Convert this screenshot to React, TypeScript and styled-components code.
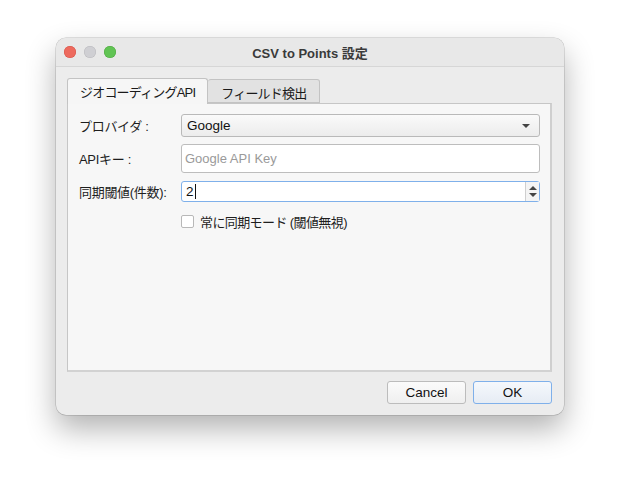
import React from "react";
import styled, { createGlobalStyle } from "styled-components";

const Global = createGlobalStyle`
  html, body { margin: 0; padding: 0; background: #ffffff; }
  body { font-family: "Liberation Sans", "Noto Sans CJK JP", sans-serif; }
  * { box-sizing: border-box; }
`;

const Page = styled.div`
  width: 620px;
  height: 490px;
  padding: 38px 0 0 56px;
  background: #ffffff;
`;

const Window = styled.div`
  width: 508px;
  height: 377px;
  border-radius: 10px;
  background: #ececec;
  box-shadow: 0 0 0 0.5px rgba(0, 0, 0, 0.22), 0 14px 30px rgba(0, 0, 0, 0.3);
  display: flex;
  flex-direction: column;
  overflow: hidden;
`;

const TitleBar = styled.div`
  height: 29px;
  flex: none;
  display: flex;
  align-items: center;
  padding-left: 8px;
  border-bottom: 1px solid #d6d6d6;
  background: #e8e8e8;
  position: relative;
`;

const Lights = styled.div`
  display: flex;
  gap: 8px;
`;

const Light = styled.span<{ $c: string; $b: string }>`
  width: 12px;
  height: 12px;
  border-radius: 50%;
  background: ${(p) => p.$c};
  box-shadow: inset 0 0 0 0.5px ${(p) => p.$b};
`;

const Title = styled.div`
  position: absolute;
  left: 0;
  right: 0;
  top: 0;
  bottom: 0;
  display: flex;
  align-items: center;
  justify-content: center;
  font-size: 13px;
  font-weight: bold;
  color: #3a3a3a;
  pointer-events: none;
`;

const Body = styled.div`
  flex: 1;
  display: flex;
  flex-direction: column;
  padding: 11px 12px 11px 11px;
`;

const TabStrip = styled.div`
  display: flex;
  align-items: flex-end;
  height: 25px;
  position: relative;
  z-index: 1;
`;

const Tab = styled.div<{ $active?: boolean }>`
  height: ${(p) => (p.$active ? "26px" : "24px")};
  margin-bottom: ${(p) => (p.$active ? "-1px" : "0")};
  padding: ${(p) => (p.$active ? "0 12px 0 12px" : "2px 13px 0 13px")};
  display: flex;
  align-items: center;
  font-size: 13px;
  letter-spacing: -0.8px;
  color: #1a1a1a;
  background: ${(p) => (p.$active ? "#f6f6f6" : "#e2e2e2")};
  border: 1px solid #c3c3c3;
  border-bottom: ${(p) => (p.$active ? "none" : "1px solid #c3c3c3")};
  border-left: ${(p) => (p.$active ? "1px solid #c3c3c3" : "none")};
  border-radius: 3px 3px 0 0;
`;

const Panel = styled.div`
  flex: 1;
  background: #f7f7f7;
  border: 1px solid #c6c6c6;
  border-right: 2px solid #cfcfcf;
  border-bottom: 2px solid #d2d2d2;
  padding: 10px 10px 0 11px;
  display: grid;
  grid-template-columns: 102px 1fr;
  grid-auto-rows: min-content;
  align-content: start;
  row-gap: 7px;
`;

const Label = styled.div`
  font-size: 13px;
  letter-spacing: -0.3px;
  color: #1e1e1e;
  display: flex;
  align-items: center;
  white-space: nowrap;
`;

const Combo = styled.div`
  height: 23px;
  border: 1px solid #b9b9b9;
  border-radius: 3px;
  background: linear-gradient(#fafafa, #ececec);
  display: flex;
  align-items: center;
  justify-content: space-between;
  padding: 0 9px 0 5px;
  font-size: 13.5px;
  color: #111;
`;

const Caret = styled.span`
  width: 0;
  height: 0;
  border-left: 4px solid transparent;
  border-right: 4px solid transparent;
  border-top: 4px solid #444;
`;

const TextField = styled.div`
  height: 29px;
  border: 1px solid #bdbdbd;
  border-radius: 3px;
  background: #ffffff;
  display: flex;
  align-items: center;
  padding: 0 6px 0 3px;
  font-size: 13px;
  color: #9a9a9a;
`;

const Spinner = styled.div`
  height: 21px;
  margin-top: 1px;
  border: 1px solid #7fb0ea;
  border-radius: 3px;
  background: #ffffff;
  display: flex;
  align-items: stretch;
  font-size: 13.5px;
  color: #111;
`;

const SpinValue = styled.div`
  flex: 1;
  display: flex;
  align-items: center;
  padding-left: 4px;
`;

const Cursor = styled.span`
  display: inline-block;
  width: 1px;
  height: 15px;
  background: #111;
  margin-left: 1px;
`;

const SpinButtons = styled.div`
  width: 14px;
  border-left: 1px solid #cfcfcf;
  display: flex;
  flex-direction: column;
  align-items: center;
  justify-content: center;
  gap: 3px;
  background: #f4f4f4;
`;

const Arrow = styled.span<{ $up?: boolean }>`
  width: 0;
  height: 0;
  border-left: 4px solid transparent;
  border-right: 4px solid transparent;
  ${(p) => (p.$up ? "border-bottom: 4px solid #444;" : "border-top: 4px solid #444;")}
`;

const CheckRow = styled.label`
  grid-column: 2;
  margin-top: 3px;
  display: flex;
  align-items: center;
  gap: 6px;
  font-size: 13px;
  letter-spacing: -0.6px;
  color: #1e1e1e;
`;

const CheckBox = styled.span`
  width: 13px;
  height: 13px;
  flex: none;
  border: 1px solid #b8b8b8;
  border-radius: 2px;
  background: #ffffff;
`;

const Footer = styled.div`
  display: flex;
  justify-content: flex-end;
  gap: 7px;
  padding-top: 9px;
`;

const Button = styled.div<{ $default?: boolean }>`
  width: 79px;
  height: 23px;
  border: 1px solid ${(p) => (p.$default ? "#7fb0ea" : "#bcbcbc")};
  border-radius: 3px;
  background: ${(p) => (p.$default ? "linear-gradient(#f5f8fc, #e6ecf4)" : "linear-gradient(#fbfbfb, #efefef)")};
  display: flex;
  align-items: center;
  justify-content: center;
  font-size: 13.5px;
  color: #111;
`;

export default function App() {
  return (
    <>
      <Global />
      <Page>
        <Window>
          <TitleBar>
            <Lights>
              <Light $c="#ed6a5e" $b="#d65247" />
              <Light $c="#cfcfd3" $b="#b9b9bd" />
              <Light $c="#61c454" $b="#4ea73f" />
            </Lights>
            <Title>CSV to Points 設定</Title>
          </TitleBar>
          <Body>
            <TabStrip>
              <Tab $active>ジオコーディングAPI</Tab>
              <Tab>フィールド検出</Tab>
            </TabStrip>
            <Panel>
              <Label>プロバイダ :</Label>
              <Combo>
                Google
                <Caret />
              </Combo>
              <Label>APIキー :</Label>
              <TextField>Google API Key</TextField>
              <Label>同期閾値(件数):</Label>
              <Spinner>
                <SpinValue>
                  2<Cursor />
                </SpinValue>
                <SpinButtons>
                  <Arrow $up />
                  <Arrow />
                </SpinButtons>
              </Spinner>
              <CheckRow>
                <CheckBox />
                常に同期モード (閾値無視)
              </CheckRow>
            </Panel>
            <Footer>
              <Button>Cancel</Button>
              <Button $default>OK</Button>
            </Footer>
          </Body>
        </Window>
      </Page>
    </>
  );
}
